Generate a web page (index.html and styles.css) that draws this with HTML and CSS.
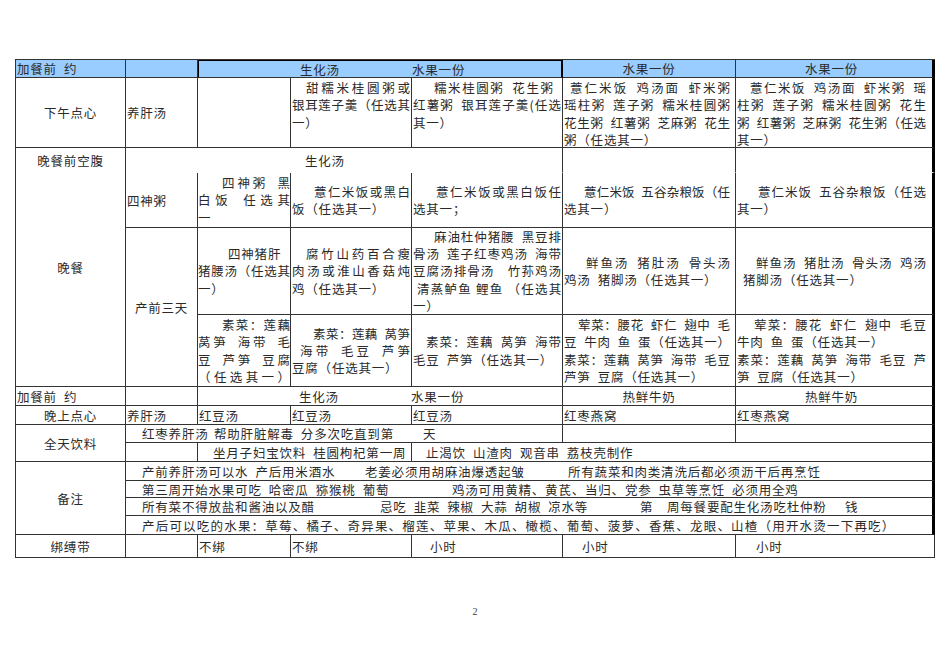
FILE: index.html
```html
<!DOCTYPE html>
<html lang="zh-CN">
<head>
<meta charset="utf-8">
<title>月子餐单</title>
<link rel="stylesheet" href="styles.css">
</head>
<body>
<div class="sheet">
  <!-- R1 header -->
  <div class="cell hd">加餐前&ensp;约</div>
  <div class="cell hd"></div>
  <div class="cell hd sel s3"><div class="split"><span class="sa">生化汤</span><span>水果一份</span></div></div>
  <div class="cell hd tc">水果一份</div>
  <div class="cell hd tc last">水果一份</div>

  <!-- R2 -->
  <div class="cell tc">下午点心</div>
  <div class="cell">养肝汤</div>
  <div class="cell p0"></div>
  <div class="cell top ml">
    <span class="ln j in14">甜糯米桂圆粥或</span>
    <span class="ln j">银耳莲子羹（任选其</span>
    <span class="ln">一）</span>
  </div>
  <div class="cell top ml">
    <span class="ln j in21 pr8">糯米桂圆粥&ensp;花生粥</span>
    <span class="ln j">红薯粥&ensp;银耳莲子羹(任选</span>
    <span class="ln">其一）</span>
  </div>
  <div class="cell top ml c6">
    <span class="ln j in6">薏仁米饭&ensp;鸡汤面&ensp;虾米粥</span>
    <span class="ln j">瑶柱粥&ensp;莲子粥&ensp;糯米桂圆粥</span>
    <span class="ln j">花生粥&ensp;红薯粥&ensp;芝麻粥&ensp;花生</span>
    <span class="ln">粥（任选其一）</span>
  </div>
  <div class="cell top ml last">
    <span class="ln j in13">薏仁米饭&ensp;鸡汤面&ensp;虾米粥&ensp;瑶</span>
    <span class="ln j">柱粥&ensp;莲子粥&ensp;糯米桂圆粥&ensp;花生</span>
    <span class="ln j">粥&ensp;红薯粥&ensp;芝麻粥&ensp;花生粥（任选</span>
    <span class="ln">其一）</span>
  </div>

  <!-- R3 -->
  <div class="cell rs4 tall"><span class="t1">晚餐前空腹</span><span class="t2">晚餐</span></div>
  <div class="cell s4 nb shh">生化汤</div>
  <div class="cell nb"></div>
  <div class="cell nb last"></div>

  <!-- R4 -->
  <div class="cell">四神粥</div>
  <div class="cell p0 ml">
    <span class="ln j in24">四神粥&ensp;黑</span>
    <span class="ln j">白饭&ensp;任选其</span>
    <span class="ln">一</span>
  </div>
  <div class="cell ml">
    <span class="ln j in22">薏仁米饭或黑白</span>
    <span class="ln">饭（任选其一）</span>
  </div>
  <div class="cell ml">
    <span class="ln j in23">薏仁米饭或黑白饭任</span>
    <span class="ln">选其一；</span>
  </div>
  <div class="cell ml c6">
    <span class="ln j in20">薏仁米饭&ensp;五谷杂粮饭（任</span>
    <span class="ln">选其一）</span>
  </div>
  <div class="cell ml last">
    <span class="ln j in21">薏仁米饭&ensp;五谷杂粮饭（任选</span>
    <span class="ln">其一）</span>
  </div>

  <!-- R5 -->
  <div class="cell rs2 tc">产前三天</div>
  <div class="cell p0 ml">
    <span class="ln in30">四神猪肝</span>
    <span class="ln j">猪腰汤（任选其</span>
    <span class="ln">一）</span>
  </div>
  <div class="cell ml">
    <span class="ln j in14">腐竹山药百合瘦</span>
    <span class="ln j">肉汤或淮山香菇炖</span>
    <span class="ln">鸡（任选其一）</span>
  </div>
  <div class="cell ml">
    <span class="ln j in21">麻油杜仲猪腰&ensp;黑豆排</span>
    <span class="ln j">骨汤&ensp;莲子红枣鸡汤&ensp;海带</span>
    <span class="ln j">豆腐汤排骨汤　竹荪鸡汤</span>
    <span class="ln j in4 t">清蒸鲈鱼 鲤鱼 （任选其</span>
    <span class="ln">一）</span>
  </div>
  <div class="cell ml c6">
    <span class="ln j in22">鲜鱼汤&ensp;猪肚汤&ensp;骨头汤</span>
    <span class="ln">鸡汤&ensp;猪脚汤（任选其一）</span>
  </div>
  <div class="cell ml last">
    <span class="ln j in19">鲜鱼汤&ensp;猪肚汤&ensp;骨头汤&ensp;鸡汤</span>
    <span class="ln in6">猪脚汤（任选其一）</span>
  </div>

  <!-- R6 -->
  <div class="cell p0 ml">
    <span class="ln j in24">素菜：莲藕</span>
    <span class="ln j">莴笋&ensp;海带&ensp;毛</span>
    <span class="ln j">豆&ensp;芦笋&ensp;豆腐</span>
    <span class="ln j">（任选其一）</span>
  </div>
  <div class="cell ml">
    <span class="ln j in21">素菜：莲藕&ensp;莴笋</span>
    <span class="ln j in8">海带&ensp;毛豆&ensp;芦笋</span>
    <span class="ln">豆腐（任选其一）</span>
  </div>
  <div class="cell ml">
    <span class="ln j in13">素菜：莲藕&ensp;莴笋&ensp;海带</span>
    <span class="ln">毛豆&ensp;芦笋（任选其一）</span>
  </div>
  <div class="cell ml c6">
    <span class="ln j in14">荤菜：腰花&ensp;虾仁&ensp;翅中&ensp;毛</span>
    <span class="ln j">豆&ensp;牛肉&ensp;鱼&ensp;蛋（任选其一）</span>
    <span class="ln j">素菜：莲藕&ensp;莴笋&ensp;海带&ensp;毛豆</span>
    <span class="ln">芦笋&ensp;豆腐（任选其一）</span>
  </div>
  <div class="cell ml last">
    <span class="ln j in17">荤菜：腰花&ensp;虾仁&ensp;翅中&ensp;毛豆</span>
    <span class="ln">牛肉&ensp;鱼&ensp;蛋（任选其一）</span>
    <span class="ln j">素菜：莲藕&ensp;莴笋&ensp;海带&ensp;毛豆&ensp;芦</span>
    <span class="ln">笋&ensp;豆腐（任选其一）</span>
  </div>

  <!-- R7 -->
  <div class="cell">加餐前&ensp;约</div>
  <div class="cell"></div>
  <div class="cell s3"><div class="split"><span class="sa">生化汤</span><span>水果一份</span></div></div>
  <div class="cell tc">热鲜牛奶</div>
  <div class="cell tc last">热鲜牛奶</div>

  <!-- R8 -->
  <div class="cell tc">晚上点心</div>
  <div class="cell">养肝汤</div>
  <div class="cell">红豆汤</div>
  <div class="cell">红豆汤</div>
  <div class="cell">红豆汤</div>
  <div class="cell">红枣燕窝</div>
  <div class="cell last">红枣燕窝</div>

  <!-- R9 -->
  <div class="cell rs2 tc">全天饮料</div>
  <div class="cell s4 pl16"><div class="row"><span class="w72">红枣养肝汤</span><span class="w209">帮助肝脏解毒&ensp;分多次吃直到第</span><span>天</span></div></div>
  <div class="cell"></div>
  <div class="cell last"></div>

  <!-- R10 -->
  <div class="cell"></div>
  <div class="cell s2 pl15">坐月子妇宝饮料&ensp;桂圆枸杞第一周</div>
  <div class="cell s3 last pl14">止渴饮&ensp;山渣肉&ensp;观音串&ensp;荔枝壳制作</div>

  <!-- R11-R14 -->
  <div class="cell rs4 tc">备注</div>
  <div class="cell s6 last pl16"><div class="row"><span class="w223">产前养肝汤可以水&ensp;产后用米酒水</span><span class="w203">老姜必须用胡麻油爆透起皱</span><span>所有蔬菜和肉类清洗后都必须沥干后再烹饪</span></div></div>
  <div class="cell s6 last pl16"><div class="row"><span class="w310">第三周开始水果可吃&ensp;哈密瓜&ensp;猕猴桃&ensp;葡萄</span><span>鸡汤可用黄精、黄芪、当归、党参&ensp;虫草等烹饪&ensp;必须用全鸡</span></div></div>
  <div class="cell s6 last pl16"><div class="row"><span class="w238">所有菜不得放盐和酱油以及醋</span><span class="w260">忌吃&ensp;韭菜&ensp;辣椒&ensp;大蒜&ensp;胡椒&ensp;凉水等</span><span class="w27">第</span><span class="w178">周每餐要配生化汤吃杜仲粉</span><span>钱</span></div></div>
  <div class="cell s6 last pl16 ls1">产后可以吃的水果：草莓、橘子、奇异果、榴莲、苹果、木瓜、橄榄、葡萄、菠萝、香蕉、龙眼、山楂（用开水烫一下再吃）</div>

  <!-- R15 -->
  <div class="cell tc">绑缚带</div>
  <div class="cell"></div>
  <div class="cell">不绑</div>
  <div class="cell">不绑</div>
  <div class="cell pl18">小时</div>
  <div class="cell pl19">小时</div>
  <div class="cell pl20">小时</div>
</div>
<div class="pageno">2</div>
</body>
</html>
```

FILE: styles.css
```css
* { box-sizing: border-box; margin: 0; padding: 0; }
html, body { background: #fff; }
body {
  margin: 0;
  font-family: "Noto Sans CJK SC", "Noto Sans CJK TC", sans-serif;
  font-size: 12.5px;
  color: #2a2a2a;
}

.sheet {
  display: grid;
  width: max-content;
  grid-template-columns: 110px 72px 93px 121px 151px 173px 199px;
  grid-template-rows: 18px 70px 25px 55px 87px 72px 19px 19px 18px 19px 19px 17px 18px 19px 23px;
  margin: 59px 0 0 15px;
  border-top: 1px solid #333;
  border-left: 1px solid #333;
  line-height: 17px;
}

.cell {
  display: flex;
  flex-direction: column;
  justify-content: center;
  border-right: 1px solid #333;
  border-bottom: 1px solid #333;
  padding: 0 1px;
  letter-spacing: 0.8px;
  white-space: nowrap;
  min-width: 0;
}

.hd { background: #99ccff; }
.sel {
  border-left: 1px solid #000;
  border-top: 1px solid #000;
  border-right: 2px solid #000;
}
.last { border-right: 3px solid #000; padding-right: 6px; }
.c6 { padding-right: 5px; }
.p0 { padding: 0; }
.nb { border-bottom-color: transparent; }
.tc { text-align: center; }
.top { justify-content: flex-start; padding-top: 1px; }
.ml { line-height: 17.3px; }

.s2 { grid-column: span 2; }
.s3 { grid-column: span 3; }
.s4 { grid-column: span 4; }
.s6 { grid-column: span 6; }
.rs2 { grid-row: span 2; }
.rs4 { grid-row: span 4; }

.ln { display: block; }
.j { text-align: justify; text-align-last: justify; letter-spacing: 0; }
.t { letter-spacing: -0.3px; }

.in4 { padding-left: 4px; }
.in6 { padding-left: 6px; }
.in8 { padding-left: 8px; }
.in13 { padding-left: 13px; }
.in14 { padding-left: 14px; }
.in17 { padding-left: 17px; }
.in19 { padding-left: 19px; }
.in20 { padding-left: 20px; }
.in21 { padding-left: 21px; }
.in22 { padding-left: 22px; }
.in23 { padding-left: 23px; }
.in24 { padding-left: 24px; }
.in30 { padding-left: 30px; }
.pr8 { padding-right: 8px; }

.tall { justify-content: flex-start; text-align: center; }
.tall .t1 { padding-top: 4px; }
.tall .t2 { margin-top: 90px; }
.shh { padding-left: 179px; }

.split { display: flex; }
.split .sa { width: 212px; padding-left: 100px; flex-shrink: 0; }

.row { display: flex; }
.row > span { flex-shrink: 0; }
.w27 { width: 27px; }
.w72 { width: 72px; }
.w178 { width: 178px; }
.w203 { width: 203px; }
.w209 { width: 209px; }
.w223 { width: 223px; }
.w238 { width: 238px; }
.w260 { width: 260px; }
.w310 { width: 310px; }

.pl14 { padding-left: 14px; }
.pl15 { padding-left: 15px; }
.pl16 { padding-left: 16px; }
.pl18 { padding-left: 18px; }
.pl19 { padding-left: 19px; }
.pl20 { padding-left: 20px; }
.ls1 { letter-spacing: 1.2px; }

.pageno {
  margin-top: 48px;
  text-align: center;
  font-family: "Liberation Serif", serif;
  font-size: 10px;
  line-height: 12px;
  color: #444;
}
```
